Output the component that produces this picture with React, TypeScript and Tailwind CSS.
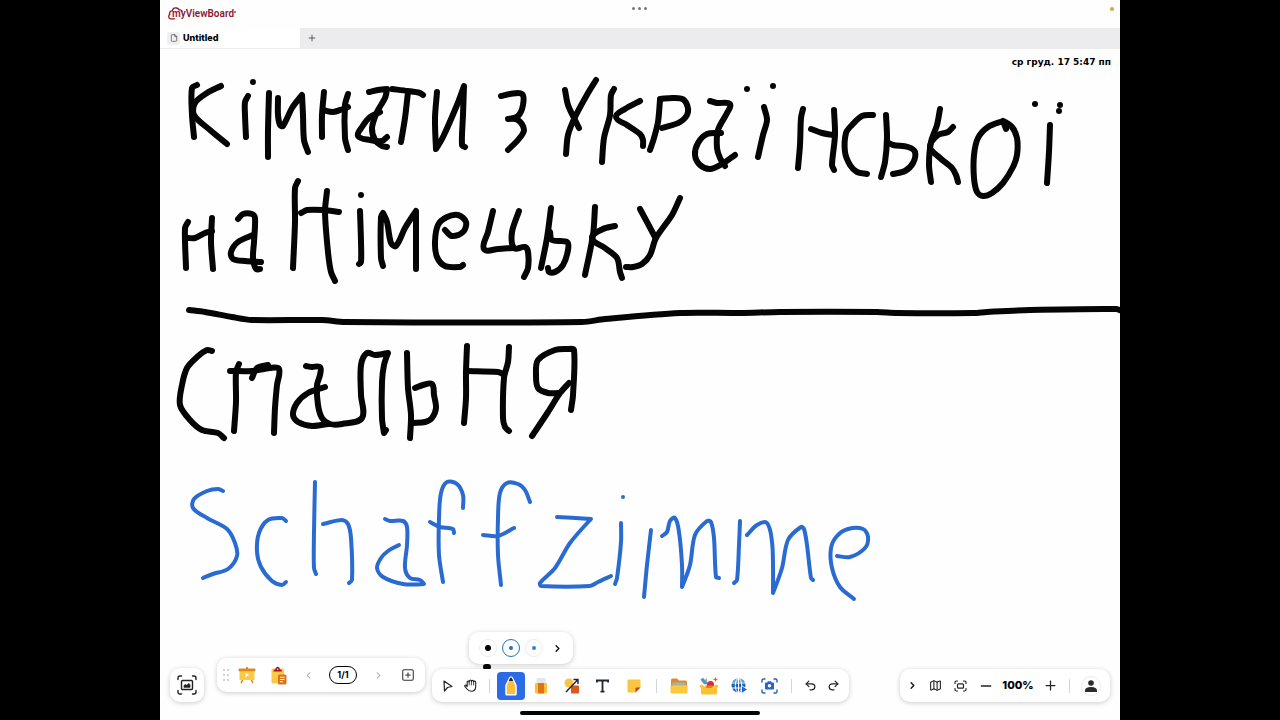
import type { ReactNode } from 'react';
import { ChevronLeft, ChevronRight, File, Minus, Plus, Map as MapIcon, SquarePlus, Undo2, Redo2 } from 'lucide-react';

type Stroke = number[][];

// Freehand strokes in board units, one list of points per pen-down
const BLACK_INK: Stroke[] = [
  // first line
  [[197, 85], [192, 88], [192, 115], [194, 137]],
  [[221, 86], [207, 93], [195, 103], [194, 115], [210, 130], [227, 144]],
  [[248, 96], [245, 102], [245, 115], [246, 137]],
  [[253, 82]],
  [[269, 93], [268, 130], [268, 157]],
  [[278, 98], [278, 115], [280, 125], [283, 126], [292, 108], [302, 95], [303, 115], [304, 140], [308, 152]],
  [[324, 92], [322, 115], [322, 137]],
  [[323, 110], [333, 112], [343, 109], [348, 107]],
  [[348, 94], [345, 105], [345, 138], [348, 150]],
  [[369, 92], [378, 90], [387, 89], [385, 98], [377, 112], [372, 128], [375, 140], [382, 146], [387, 147]],
  [[380, 112], [370, 117], [362, 127], [358, 136], [370, 140], [382, 141], [387, 137]],
  [[392, 89], [408, 91], [420, 93], [423, 95]],
  [[408, 92], [405, 118], [401, 142]],
  [[437, 92], [435, 118], [436, 149], [443, 137], [457, 105], [464, 86], [463, 115], [462, 145], [465, 147]],
  [[501, 96], [510, 94], [522, 94], [523, 105], [518, 116], [508, 119], [518, 120], [524, 130], [518, 140], [511, 147], [508, 150]],
  [[565, 90], [568, 105], [575, 120], [579, 128]],
  [[596, 80], [588, 93], [575, 117], [568, 135], [566, 154]],
  [[614, 89], [611, 95], [610, 115], [604, 138], [602, 162]],
  [[640, 101], [625, 109], [616, 117], [627, 125], [640, 134], [643, 140], [643, 146]],
  [[660, 100], [658, 122], [654, 138], [650, 150]],
  [[660, 99], [673, 98], [684, 100], [688, 112], [680, 122], [662, 128]],
  [[710, 101], [717, 103], [730, 104], [727, 113], [718, 130], [717, 148], [720, 158], [725, 166]],
  [[721, 133], [707, 134], [698, 143], [695, 155], [700, 165], [710, 169], [722, 164], [735, 155]],
  [[747, 89]],
  [[773, 86]],
  [[764, 107], [767, 120], [763, 135], [758, 157]],
  [[803, 109], [801, 118], [800, 145], [798, 168]],
  [[811, 129], [822, 133], [833, 135]],
  [[834, 110], [835, 135], [832, 165], [834, 170]],
  [[873, 115], [862, 116], [852, 125], [846, 133], [845, 152], [850, 165], [857, 172], [867, 174]],
  [[886, 115], [887, 138], [885, 162], [881, 177]],
  [[887, 142], [893, 145], [908, 147], [915, 152], [913, 163], [905, 171], [893, 174]],
  [[940, 109], [937, 125], [931, 142], [929, 165], [931, 182]],
  [[953, 127], [948, 132], [938, 135], [930, 147], [940, 158], [952, 168], [956, 175], [958, 182]],
  [[1003, 121], [988, 127], [978, 138], [974, 155], [974, 178], [977, 192], [983, 196], [992, 193], [1003, 183], [1013, 167], [1017, 155], [1017, 138], [1012, 127], [1003, 121], [1006, 129]],
  [[1050, 125], [1049, 152], [1047, 183]],
  [[1035, 104]],
  [[1060, 105]],
  [[1059, 111]],
  // second line
  [[188, 222], [185, 228], [186, 268]],
  [[188, 238], [195, 238], [205, 233], [212, 231]],
  [[212, 218], [211, 242], [213, 269]],
  [[238, 219], [243, 214], [252, 214], [255, 218], [254, 242], [253, 258], [256, 269], [260, 269]],
  [[253, 235], [238, 242], [231, 252], [233, 259], [245, 261], [261, 262]],
  [[298, 181], [295, 188], [295, 222], [293, 268]],
  [[301, 213], [307, 210], [323, 210], [339, 212]],
  [[327, 191], [325, 212], [328, 252], [331, 272], [335, 281]],
  [[360, 211], [361, 242], [361, 262], [359, 264]],
  [[361, 195]],
  [[383, 266], [381, 258], [381, 217], [383, 213], [387, 222], [391, 243], [396, 246], [405, 228], [416, 211], [416, 269]],
  [[445, 230], [452, 236], [463, 232], [466, 222], [458, 215], [447, 217], [438, 225], [435, 242], [437, 257], [445, 266], [460, 267], [463, 265]],
  [[493, 211], [488, 232], [484, 249], [498, 249], [512, 248]],
  [[519, 211], [512, 232], [514, 248], [525, 247], [528, 252], [528, 268], [524, 277]],
  [[551, 208], [547, 238], [541, 268]],
  [[550, 232], [552, 240], [567, 242], [568, 250], [563, 265], [555, 272], [549, 272], [548, 268]],
  [[595, 207], [593, 235], [585, 275]],
  [[615, 226], [603, 229], [592, 238], [605, 248], [617, 258], [620, 272], [622, 278]],
  [[640, 209], [647, 222], [655, 237]],
  [[680, 198], [672, 215], [656, 238], [650, 255], [642, 264], [633, 267], [626, 267]],
  // divider
  [[189, 310], [205, 312], [232, 317], [252, 320], [322, 320], [345, 322], [582, 322], [605, 319], [680, 313], [740, 313], [780, 312], [877, 312], [897, 313], [973, 313], [987, 312], [1030, 310], [1116, 309], [1122, 311]],
  // third line
  [[212, 351], [207, 350], [197, 357], [187, 368], [182, 385], [180, 405], [190, 420], [202, 430], [218, 433], [224, 438]],
  [[239, 364], [236, 372], [236, 402], [234, 431]],
  [[230, 371], [252, 371], [270, 368], [279, 369], [277, 385], [275, 408], [274, 433]],
  [[252, 378], [257, 368], [268, 365]],
  [[306, 366], [312, 367], [320, 367], [320, 375], [317, 385], [318, 405], [322, 418], [330, 424], [342, 424], [362, 418], [361, 395], [361, 365], [367, 353], [375, 355], [388, 353], [384, 365], [382, 382], [382, 418], [384, 433], [386, 430]],
  [[325, 387], [308, 393], [297, 403], [293, 415], [298, 422], [312, 426], [328, 424]],
  [[407, 353], [408, 388], [411, 415], [410, 438]],
  [[415, 388], [423, 385], [432, 384], [434, 395], [436, 408], [432, 418], [425, 422], [413, 423]],
  [[467, 346], [466, 372], [466, 398], [464, 423]],
  [[467, 371], [498, 372], [503, 374]],
  [[509, 347], [508, 362], [504, 378], [503, 418], [505, 427], [509, 431]],
  [[571, 410], [573, 395], [574, 350], [568, 349], [555, 350], [538, 360], [536, 375], [538, 388], [548, 393], [558, 393]],
  [[569, 383], [560, 393], [548, 412], [532, 436]],
  [[486, 667], [488, 667]],
];

const BLUE_INK: Stroke[] = [
  [[223, 491], [218, 489], [207, 491], [194, 499], [193, 508], [207, 518], [227, 529], [235, 543], [237, 556], [228, 569], [213, 574], [203, 578]],
  [[286, 521], [282, 518], [268, 520], [259, 533], [257, 552], [261, 567], [272, 581], [282, 585], [286, 582]],
  [[315, 482], [314, 532], [314, 568], [316, 574]],
  [[323, 524], [342, 520], [348, 524], [351, 538], [352, 580], [349, 583]],
  [[385, 519], [390, 521], [403, 521], [407, 527], [407, 545], [405, 568], [410, 578], [420, 580], [424, 584], [403, 584], [383, 577], [377, 568], [381, 558], [388, 551], [399, 545]],
  [[463, 508], [463, 495], [457, 484], [447, 482], [441, 493], [439, 518], [439, 555], [443, 582]],
  [[430, 522], [440, 527], [453, 529], [454, 533]],
  [[530, 502], [525, 490], [518, 484], [507, 483], [500, 493], [498, 518], [498, 555], [501, 585]],
  [[483, 535], [498, 536], [514, 528]],
  [[557, 517], [591, 519], [570, 543], [555, 568], [540, 583], [541, 586], [590, 586], [598, 582], [611, 576]],
  [[621, 523], [621, 542], [617, 578], [615, 584]],
  [[623, 497]],
  [[651, 530], [647, 565], [644, 597]],
  [[662, 536], [667, 532], [670, 521], [675, 518], [679, 532], [682, 565], [682, 587], [690, 565], [695, 535], [707, 521], [711, 522], [714, 538], [716, 577], [719, 578]],
  [[740, 521], [739, 545], [737, 580], [734, 583]],
  [[747, 535], [757, 525], [767, 523], [772, 542], [773, 565], [773, 593], [782, 568], [788, 540], [801, 527], [804, 529], [807, 545], [811, 578], [813, 580]],
  [[837, 556], [850, 557], [865, 548], [868, 537], [863, 529], [848, 529], [837, 536], [831, 548], [832, 568], [840, 587], [854, 599]],
];

// Smooth through the points, but keep a sharp turn of the pen as a corner
function smooth(pts: Stroke) {
  let d = `M${pts[0][0]} ${pts[0][1]}`;
  if (pts.length === 1) return d + 'h0.01';
  const dist = (a: number[], b: number[]) => Math.hypot(a[0] - b[0], a[1] - b[1]) || 1;
  const isCorner = (i: number) => {
    const [a, b, c] = [pts[i - 1], pts[i], pts[i + 1]];
    if (!a || !c) return false;
    const dot = (b[0] - a[0]) * (c[0] - b[0]) + (b[1] - a[1]) * (c[1] - b[1]);
    return dot / (dist(a, b) * dist(b, c)) < -0.3;
  };
  for (let i = 0; i < pts.length - 1; i++) {
    const p0 = pts[i - 1] ?? pts[i];
    const p1 = pts[i];
    const p2 = pts[i + 1];
    const p3 = pts[i + 2] ?? p2;
    const len = dist(p1, p2) * 0.3;
    const k1 = isCorner(i) ? 0 : len / dist(p0, p2);
    const k2 = isCorner(i + 1) ? 0 : len / dist(p1, p3);
    const c1 = [p1[0] + (p2[0] - p0[0]) * k1, p1[1] + (p2[1] - p0[1]) * k1];
    const c2 = [p2[0] - (p3[0] - p1[0]) * k2, p2[1] - (p3[1] - p1[1]) * k2];
    d += `C${c1.join(' ')} ${c2.join(' ')} ${p2.join(' ')}`;
  }
  return d;
}

function Ink({ strokes, color, width }: { strokes: Stroke[]; color: string; width: number }) {
  return (
    <g fill="none" stroke={color} strokeWidth={width} strokeLinecap="round" strokeLinejoin="round">
      {strokes.map((s, i) => (
        <path key={i} d={smooth(s)} />
      ))}
    </g>
  );
}

function Tool({ label, className = '', children }: { label: string; className?: string; children: ReactNode }) {
  return (
    <button aria-label={label} className={`flex h-7 shrink-0 items-center justify-center text-[#222] ${className}`}>
      {children}
    </button>
  );
}

function Divider({ className = 'mx-[7px]' }: { className?: string }) {
  return <span className={`h-3.5 w-px shrink-0 bg-[#d4d4d8] ${className}`} />;
}

const panel = 'flex items-center rounded-[10px] bg-white shadow-[0_1px_5px_rgba(0,0,0,0.2)]';

function Logo() {
  return (
    <a href="#" aria-label="myViewBoard" className="relative flex h-[14px] items-center pl-1 font-[Roboto,sans-serif] text-[10px] leading-[14px] font-semibold text-[#8f1732]">
      <svg className="absolute top-0 left-0" width="16" height="14" viewBox="0 0 16 14" fill="none" stroke="#8f1732" strokeWidth="1.3" strokeLinecap="round">
        <path d="M2.6 11.8C.4 11.4.2 8.400 1.800 7.400 1 5.400 2.400 3.600 4.200 3.800 4.800 1.600 6.600.5 8.600 1c1.300.3 2.100 1 2.600 2 1.700-.2 2.600.4 3 1.200M2.600 11.800h4" />
      </svg>
      myViewBoard
      <span className="mb-1 h-[2px] w-[2px] rounded-full bg-[#b0485e]" />
    </a>
  );
}

function Header() {
  return (
    <header className="shrink-0">
      <div className="grid h-7 grid-cols-3 items-start px-2 pt-[7px]">
        <Logo />
        <button aria-label="Window options" className="flex h-[3px] gap-[3px] justify-self-center">
          <span className="size-[3px] rounded-full bg-[#77777a]" />
          <span className="size-[3px] rounded-full bg-[#77777a]" />
          <span className="size-[3px] rounded-full bg-[#77777a]" />
        </button>
        <span className="-mr-[2px] h-1 w-1 justify-self-end rounded-full bg-[#d9a33c]" />
      </div>
      <nav className="flex h-[21px] border-b border-[#eeeef0] bg-[#ecebee]">
        <button className="flex w-[140px] items-center gap-[3px] bg-white pl-[7px] text-[9px] font-extrabold text-black">
          <span className="flex size-[13px] items-center justify-center rounded-[3px] bg-[#efeff1]">
            <File size={8} strokeWidth={2} color="#444" />
          </span>
          Untitled
        </button>
        <button aria-label="New tab" className="flex w-6 items-center justify-center">
          <Plus size={10} strokeWidth={2} color="#444" />
        </button>
      </nav>
    </header>
  );
}

function SnapshotButton() {
  return (
    <button aria-label="Fit to screen" className={`${panel} size-[34px] justify-center`}>
      <svg width="20" height="20" viewBox="0 0 20 20" fill="none" stroke="#222" strokeWidth="1.4" strokeLinecap="round" strokeLinejoin="round">
        <path d="M1 4.500V3q0-2 2-2h1.500M15.500 1H17q2 0 2 2v1.500M19 15.500V17q0 2-2 2h-1.500M4.500 19H3q-2 0-2-2v-1.500" />
        <rect x="4.5" y="5.5" width="11" height="9" rx="1" />
        <path d="M7 12V10.500l1.500-1 1.200.8L12 8.500l1 1.500V12z" fill="#222" strokeWidth=".8" />
      </svg>
    </button>
  );
}

function PageBar() {
  return (
    <div className={`${panel} mb-[10px] ml-[13px] h-[34px] pl-1`}>
      <Tool label="Move toolbar" className="w-[10px]">
        <svg width="6" height="12" viewBox="0 0 6 12" fill="#c4c4c8">
          {[1, 6, 11].map((y) => (
            <g key={y}>
              <circle cx="1" cy={y} r="1" />
              <circle cx="5" cy={y} r="1" />
            </g>
          ))}
        </svg>
      </Tool>
      <Tool label="Present" className="w-8">
        <svg width="18" height="18" viewBox="0 0 18 18">
          <path d="M5 13l-1.700 3.500M13 13l1.700 3.500" stroke="#d48a1c" strokeWidth="1.6" strokeLinecap="round" />
          <rect x="8" y="1" width="2" height="3" rx="1" fill="#c87a18" />
          <rect x="1.5" y="3.5" width="15" height="10.5" fill="#fbca45" />
          <rect x=".5" y="2.5" width="17" height="2.7" rx="1" fill="#d98a1e" />
          <path d="M7.500 6.800v4.400l3.600-2.200z" fill="#fff" />
        </svg>
      </Tool>
      <Tool label="Paste" className="w-8">
        <svg width="16" height="19" viewBox="0 0 16 19">
          <rect x=".5" y="2.5" width="12.5" height="15" rx="1.5" fill="#fbca45" />
          <path d="M2.500 5.500c0-1.500.6-2 2-2C4.600 1.600 5.500.8 6.700.8s2.100.8 2.200 2.700c1.400 0 2 .5 2 2z" fill="#a3122c" />
          <circle cx="6.7" cy="3.2" r=".7" fill="#fff" />
          <rect x="7" y="8.5" width="8.5" height="10" rx="1.5" fill="#d9761c" />
          <path d="M9 11.200h4.500M9 13.500h4.500M9 15.800h2.800" stroke="#fff" strokeWidth="1.1" />
        </svg>
      </Tool>
      <Tool label="Previous page" className="w-[26px]">
        <ChevronLeft size={11} strokeWidth={2.2} color="#a8a8ac" />
      </Tool>
      <button className="ml-2 flex h-[18px] w-7 items-center justify-center rounded-full border border-black text-[9px] font-bold text-black">
        1/1
      </button>
      <Tool label="Next page" className="ml-2 w-[26px]">
        <ChevronRight size={11} strokeWidth={2.2} color="#a8a8ac" />
      </Tool>
      <Tool label="Add page" className="w-[34px]">
        <SquarePlus size={14} strokeWidth={1.8} color="#333" />
      </Tool>
    </div>
  );
}

function PenPopover() {
  return (
    <div className={`${panel} absolute bottom-full left-[37px] mb-[5px] h-8 gap-[5px] pr-[7px] pl-[10px]`}>
      <button aria-label="Black pen" className="flex size-[18px] items-center justify-center rounded-full border border-[#ececee]">
        <span className="size-[6px] rounded-full bg-black" />
      </button>
      <button aria-label="Blue pen" className="flex size-[18px] items-center justify-center rounded-full border border-[#2272bd]">
        <span className="size-1 rounded-full bg-[#2272bd]" />
      </button>
      <button aria-label="Light blue pen" className="flex size-[18px] items-center justify-center rounded-full border border-[#ececee]">
        <span className="size-1 rounded-full bg-[#3483c8]" />
      </button>
      <button aria-label="More pens" className="flex size-[18px] items-center justify-center">
        <ChevronRight size={11} strokeWidth={3} color="#111" />
      </button>
    </div>
  );
}

function ToolBar() {
  return (
    <div className={`${panel} relative ml-[7px] h-[33px] px-1`}>
      <PenPopover />
      <Tool label="Select" className="w-[23px]">
        <svg width="10" height="12" viewBox="0 0 10 12" fill="none" stroke="#222" strokeWidth="1.2" strokeLinejoin="round">
          <path d="M1 1l8 5.500-4.500 1L1.500 11z" />
        </svg>
      </Tool>
      <Tool label="Pan" className="w-[23px]">
        <svg width="13" height="13" viewBox="0 0 13 13" fill="none" stroke="#222" strokeWidth="1.1" strokeLinecap="round" strokeLinejoin="round">
          <path d="M3.200 7.500V3.200q0-1.100 1-1.100t1 .9q0-2 1.100-2t1.100 1.600q.1-1.200 1.100-1.200t1.100 1.500q.1-.8 1.100-.8t1 1.300V7.500Q11.700 12.200 7.200 12.200 4.600 12.200 3 10L.8 7.300Q.6 6 1.700 6z" />
          <path d="M5.200 3v3M7.400 2.600V6M9.600 3v3" strokeWidth=".8" />
        </svg>
      </Tool>
      <Divider />
      <Tool label="Pen" className="w-7 rounded bg-[#2c6be8]">
        <svg width="14" height="20" viewBox="0 0 14 20">
          <path d="M7 1Q8.300 1 9 3.200L12 9.500v8.500q0 .8-.8.8H2.800q-.8 0-.8-.8V9.500L5 3.200Q5.700 1 7 1z" fill="#fbbf3c" stroke="#fff" strokeWidth="1.5" strokeLinejoin="round" />
          <path d="M7 1.500c-.9 0-1.500 1.700-2.200 3.500h4.400c-.7-1.800-1.300-3.500-2.200-3.500z" fill="#1f2547" />
        </svg>
      </Tool>
      <Tool label="Eraser" className="w-[31px]">
        <svg width="12" height="17" viewBox="0 0 12 17">
          <path d="M1.500 6V2.500Q1.500 1 3 1h6q1.500 0 1.500 1.500V6z" fill="#e5e5ea" />
          <rect y="6" width="12" height="10.5" rx="1" fill="#fbbf3c" />
          <path d="M3 6h6v10.500H3z" fill="#df7412" />
        </svg>
      </Tool>
      <Tool label="Shapes" className="w-[31px]">
        <svg width="16" height="16" viewBox="0 0 16 16">
          <circle cx="5" cy="5" r="4.5" fill="#fbc53f" />
          <rect x="7" y="7.5" width="8" height="8" rx="1" fill="#d9581c" />
          <path d="M2 14L13.500 2M9.500 1.500h4.500v4.500" fill="none" stroke="#1c2038" strokeWidth="1.4" />
        </svg>
      </Tool>
      <Tool label="Text" className="w-[31px]">
        <svg width="13" height="14" viewBox="0 0 13 14" fill="none" stroke="#20243a" strokeWidth="1.8">
          <path d="M.9 3.500V1.500h11.200v2M6.500 1.500v11M4.500 12.700h4" />
        </svg>
      </Tool>
      <Tool label="Sticky note" className="w-[31px]">
        <svg width="14" height="14" viewBox="0 0 14 14">
          <path d="M1.500.5h11q1 0 1 1V8.500l-5 5h-7q-1 0-1-1v-11q0-1 1-1z" fill="#fbc53f" />
          <path d="M8.500 13.500v-4q0-1 1-1h4z" fill="#c8430f" />
        </svg>
      </Tool>
      <Divider />
      <Tool label="Files" className="w-[30px]">
        <svg width="18" height="16" viewBox="0 0 18 16">
          <path d="M1 2q0-1.500 1.500-1.500H7L9 2.500h6.500Q17 2.500 17 4v6H1z" fill="#df8a24" />
          <rect x="2.5" y="4.5" width="13" height="5" fill="#9eb3b8" />
          <path d="M.5 7.500h17V14q0 1.500-1.500 1.500H2Q.5 15.500.5 14z" fill="#fcc93d" />
        </svg>
      </Tool>
      <Tool label="Magic box" className="w-[30px]">
        <svg width="20" height="18" viewBox="0 0 20 18">
          <path d="M1.500 2.500L4 .8l5.500 6.500H5z" fill="#4d92c4" />
          <path d="M5.500 3.500l2-2.500 1.500 6z" fill="#7dbb9a" />
          <circle cx="11.5" cy="7.5" r="3.5" fill="#cf2f3f" />
          <path d="M16.500 0l.8 1.700 1.700.8-1.700.8-.8 1.700-.8-1.700-1.700-.8 1.700-.8z" fill="#d9661c" />
          <path d="M.5 8.500L3 7.500l2.500 2h9L17 7.500l2.500 1-1.500 3v4.500q0 1.500-1.500 1.500h-13Q2 17.500 2 16v-4.500z" fill="#fcc22f" />
          <path d="M6 8.500h8L12.500 11h-5z" fill="#e8791e" />
        </svg>
      </Tool>
      <Tool label="Web" className="w-[30px]">
        <svg width="17" height="16" viewBox="0 0 17 16">
          <circle cx="7.5" cy="7.5" r="7" fill="#2463ad" />
          <path d="M1.500 4A7 7 0 0 1 13.500 4z" fill="#55a5dd" />
          <ellipse cx="7.5" cy="7.5" rx="3.2" ry="7" fill="none" stroke="#fff" strokeWidth="1" />
          <path d="M0 5h15M0 10h15M7.500 0v15" stroke="#fff" strokeWidth="1" />
          <path d="M10.500 7.500l6 4-6 4z" fill="#2463d0" stroke="#fff" strokeWidth=".8" />
        </svg>
      </Tool>
      <Tool label="Screenshot" className="w-[30px]">
        <svg width="17" height="16" viewBox="0 0 17 16">
          <path d="M1 4V2.500Q1 1 2.500 1H4M13 1h1.500Q16 1 16 2.500V4M16 12v1.500q0 1.500-1.500 1.500H13M4 15H2.500Q1 15 1 13.500V12" fill="none" stroke="#2c5fae" strokeWidth="1.4" strokeLinecap="round" />
          <path d="M5 4.500h1.200L7 3.200h3l.8 1.300H12q1 0 1 1v5q0 1-1 1H5q-1 0-1-1v-5q0-1 1-1z" fill="#2a62cf" />
          <circle cx="8.5" cy="7.8" r="1.7" fill="#fff" />
        </svg>
      </Tool>
      <Divider />
      <Tool label="Undo" className="w-[23px]">
        <Undo2 size={13} strokeWidth={2.2} />
      </Tool>
      <Tool label="Redo" className="w-[23px]">
        <Redo2 size={13} strokeWidth={2.2} />
      </Tool>
    </div>
  );
}

function ZoomBar() {
  return (
    <div className={`${panel} ml-auto h-[33px] pr-1 pl-px`}>
      <Tool label="Collapse" className="w-[22px]">
        <ChevronRight size={11} strokeWidth={3} color="#111" />
      </Tool>
      <Tool label="Minimap" className="w-6">
        <MapIcon size={13} strokeWidth={2} />
      </Tool>
      <Tool label="Fit page" className="w-[26px]">
        <svg width="13" height="12" viewBox="0 0 13 12" fill="none" stroke="#222" strokeWidth="1.2" strokeLinecap="round">
          <path d="M1 3.500V2.500Q1 1 2.500 1h1M9.500 1h1Q12 1 12 2.500v1M12 8.500v1q0 1.500-1.500 1.500h-1M3.500 11h-1Q1 11 1 9.500v-1" />
          <rect x="3.5" y="3.8" width="6" height="4.4" rx="1" />
        </svg>
      </Tool>
      <Tool label="Zoom out" className="w-[26px]">
        <Minus size={16} strokeWidth={2} />
      </Tool>
      <span className="w-[38px] text-center text-[11px] font-extrabold text-black">100%</span>
      <Tool label="Zoom in" className="w-[26px]">
        <Plus size={15} strokeWidth={2} />
      </Tool>
      <Divider className="mx-[6px]" />
      <Tool label="Account" className="w-[30px]">
        <span className="flex size-5 items-center justify-center rounded-full border border-[#ececee]">
          <svg width="12" height="12" viewBox="0 0 12 12" fill="#2b2b2e">
            <circle cx="6" cy="3" r="2.8" />
            <path d="M0 12V10.500Q0 7 6 7t6 3.500V12z" />
          </svg>
        </span>
      </Tool>
    </div>
  );
}

export default function App() {
  return (
    <div className="h-screen overflow-hidden bg-black font-[Inter,'Noto_Sans',sans-serif]">
      <div className="mx-auto flex h-full w-3/4 flex-col bg-[#fefefe]">
        <Header />
        <main className="relative flex min-h-0 flex-1 flex-col overflow-hidden">
          <svg
            role="img"
            aria-label="Кімнати з Української на Німецьку — Спальня — Schaffzimme"
            className="absolute inset-0 h-full w-full"
            viewBox="160 49 960 671"
            preserveAspectRatio="xMinYMin meet"
          >
            <Ink strokes={BLACK_INK} color="#050505" width={6} />
            <Ink strokes={BLUE_INK} color="#2a6bd2" width={4} />
          </svg>
          <time className="relative self-end pt-[5px] pr-[9px] font-['DejaVu_Sans',sans-serif] text-[9px] leading-4 font-bold text-black">
            ср груд. 17 5:47 пп
          </time>
          <div className="relative mt-auto flex items-end px-[10px]">
            <SnapshotButton />
            <PageBar />
            <ToolBar />
            <ZoomBar />
          </div>
          <div className="relative mx-auto mt-[9px] mb-[5px] h-1 w-1/4 rounded-full bg-black" />
        </main>
      </div>
    </div>
  );
}
